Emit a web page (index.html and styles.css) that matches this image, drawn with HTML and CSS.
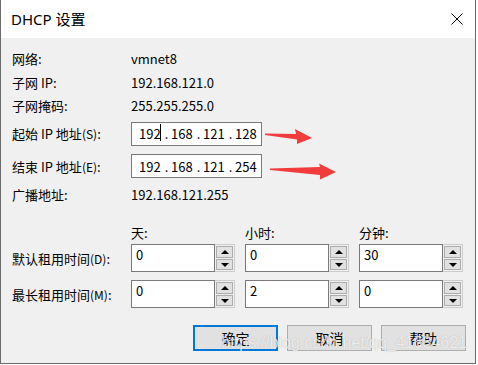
FILE: index.html
```html
<!DOCTYPE html>
<html lang="zh-CN">
<head>
    <meta charset="UTF-8">
    <meta name="viewport" content="width=device-width, initial-scale=1.0">
    <title>DHCP 设置</title>
    <link rel="stylesheet" href="styles.css">
</head>
<body>
    <div class="window">
        <div class="titlebar">
            <span class="title">DHCP 设置</span>
            <svg class="close" width="12" height="12" viewBox="0 0 12 12">
                <path d="M0.5 0.5 L11.5 11.5 M11.5 0.5 L0.5 11.5" stroke="#000" stroke-width="1" fill="none"/>
            </svg>
        </div>

        <div class="content">
            <div class="row row-a">
                <span class="label">网络:</span>
                <span class="value">vmnet8</span>
            </div>
            <div class="row row-a">
                <span class="label">子网 IP:</span>
                <span class="value">192.168.121.0</span>
            </div>
            <div class="row row-b">
                <span class="label">子网掩码:</span>
                <span class="value">255.255.255.0</span>
            </div>
            <div class="row row-ip1">
                <span class="label">起始 IP 地址<small>(S)</small>:</span>
                <div class="ip-box">
                    <span class="octet caret">192</span><span class="dot">.</span>
                    <span class="octet">168</span><span class="dot">.</span>
                    <span class="octet">121</span><span class="dot">.</span>
                    <span class="octet">128</span>
                </div>
            </div>
            <div class="row row-ip2">
                <span class="label">结束 IP 地址<small>(E)</small>:</span>
                <div class="ip-box">
                    <span class="octet">192</span><span class="dot">.</span>
                    <span class="octet">168</span><span class="dot">.</span>
                    <span class="octet">121</span><span class="dot">.</span>
                    <span class="octet">254</span>
                </div>
            </div>
            <div class="row row-a">
                <span class="label">广播地址:</span>
                <span class="value">192.168.121.255</span>
            </div>

            <!-- 租用时间 -->
            <div class="lease-head">
                <span>天:</span>
                <span>小时:</span>
                <span>分钟:</span>
            </div>
            <div class="lease-row">
                <span class="label">默认租用时间<small>(D)</small>:</span>
                <div class="spin"><div class="spin-input">0</div><div class="spin-btns"><div class="spin-btn up"></div><div class="spin-btn down"></div></div></div>
                <div class="spin"><div class="spin-input">0</div><div class="spin-btns"><div class="spin-btn up"></div><div class="spin-btn down"></div></div></div>
                <div class="spin"><div class="spin-input">30</div><div class="spin-btns"><div class="spin-btn up"></div><div class="spin-btn down"></div></div></div>
            </div>
            <div class="lease-row second">
                <span class="label">最长租用时间<small>(M)</small>:</span>
                <div class="spin"><div class="spin-input">0</div><div class="spin-btns"><div class="spin-btn up"></div><div class="spin-btn down"></div></div></div>
                <div class="spin"><div class="spin-input">2</div><div class="spin-btns"><div class="spin-btn up"></div><div class="spin-btn down"></div></div></div>
                <div class="spin"><div class="spin-input">0</div><div class="spin-btns"><div class="spin-btn up"></div><div class="spin-btn down"></div></div></div>
            </div>

            <div class="buttons">
                <button class="btn btn-default">确定</button>
                <button class="btn">取消</button>
                <button class="btn">帮助</button>
            </div>
        </div>

        <!-- 红色箭头标注 -->
        <svg class="arrows" width="80" height="60" viewBox="260 125 80 60">
            <polygon points="265,133.5 296,134 295,129 312,138 297,144 297,139.5 265,135" fill="#f23b3b"/>
            <polygon points="270,168.5 320,167 319,163.5 336,172 320,179.5 320,175 270,170" fill="#f23b3b"/>
        </svg>

        <div class="watermark">https://blog.csdn.net/qq_41684621</div>
    </div>
</body>
</html>
```

FILE: styles.css
```css
body {
    margin: 0;
    padding: 0;
    background-color: #ffffff;
    font-family: "Noto Sans CJK SC", "Noto Sans", sans-serif;
    font-size: 13px;
    color: #000000;
}

.window {
    position: relative;
    width: 476px;
    height: 364px;
    box-sizing: border-box;
    border: 1px solid #6b6b6b;
    border-top: none;
    background-color: #f0f0f0;
}

.titlebar {
    height: 38px;
    background-color: #ffffff;
    display: flex;
    align-items: center;
    justify-content: space-between;
    padding: 0 12px 0 10px;
}

.title {
    font-family: "Noto Sans", "Noto Sans CJK SC", sans-serif;
    font-size: 15px;
    margin-top: -1px;
}

.close {
    margin-top: -1px;
}

.content {
    padding: 8px 9px 0 11px;
}

.row {
    display: flex;
    align-items: center;
    height: 24px;
}
.row-b {
    height: 23px;
}
.row-ip1 {
    height: 33px;
}
.row-ip2 {
    height: 32px;
}

.label {
    width: 119px;
    flex-shrink: 0;
    white-space: nowrap;
}
.label small {
    font-size: 12px;
}

.value {
    font-size: 13px;
}

/* IP 地址输入框 */
.ip-box {
    width: 131px;
    height: 24px;
    box-sizing: border-box;
    border: 1px solid #7a7a7a;
    background-color: #ffffff;
    display: flex;
    align-items: center;
    padding-left: 7px;
}
.octet {
    width: 23px;
    position: relative;
}
.dot {
    width: 9px;
    text-align: center;
}
.caret::after {
    content: '';
    position: absolute;
    left: 21px;
    top: 0;
    width: 1px;
    height: 17px;
    background-color: #000;
}

/* 租用时间 */
.lease-head {
    display: flex;
    gap: 10px;
    padding-left: 119px;
    height: 20px;
    align-items: center;
    margin-top: 16px;
}
.lease-head span {
    width: 104px;
}

.lease-row {
    display: flex;
    align-items: center;
    gap: 10px;
    height: 28px;
    margin-top: 2px;
}
.lease-row .label {
    width: 109px;
}
.lease-row.second {
    margin-top: 8px;
}

.spin {
    width: 104px;
    height: 28px;
    display: flex;
}
.spin-input {
    flex-grow: 1;
    box-sizing: border-box;
    border: 1px solid #7a7a7a;
    background-color: #ffffff;
    padding: 1px 0 0 4px;
    line-height: 17px;
}
.spin-btns {
    width: 20px;
    box-sizing: border-box;
    border: 1px solid #cccccc;
    border-left: none;
    padding: 1px;
    display: flex;
    flex-direction: column;
    gap: 1px;
}
.spin-btn {
    flex: 1;
    border: 1px solid #adadad;
    background-color: #e1e1e1;
    position: relative;
}
.spin-btn::after {
    content: '';
    position: absolute;
    left: 4px;
    top: 3px;
    border-left: 4px solid transparent;
    border-right: 4px solid transparent;
}
.spin-btn.up::after {
    border-bottom: 4px solid #000;
}
.spin-btn.down::after {
    border-top: 4px solid #000;
}

/* 底部按钮 */
.buttons {
    display: flex;
    justify-content: flex-end;
    gap: 9px;
    margin-top: 17px;
}
.btn {
    width: 85px;
    height: 26px;
    box-sizing: border-box;
    border: 1px solid #adadad;
    background-color: #e1e1e1;
    font-family: "Noto Sans CJK SC", sans-serif;
    font-size: 14px;
    color: #000;
    padding: 0;
}
.btn-default {
    border: 2px solid #0078d7;
}

.arrows {
    position: absolute;
    left: 259px;
    top: 125px;
}

.watermark {
    position: absolute;
    right: 8px;
    top: 334px;
    font-family: "Liberation Sans", Arial, sans-serif;
    font-size: 16px;
    color: rgba(255, 255, 255, 0.75);
    text-shadow: 0 0 1px rgba(120, 120, 120, 0.5);
    pointer-events: none;
}
```
